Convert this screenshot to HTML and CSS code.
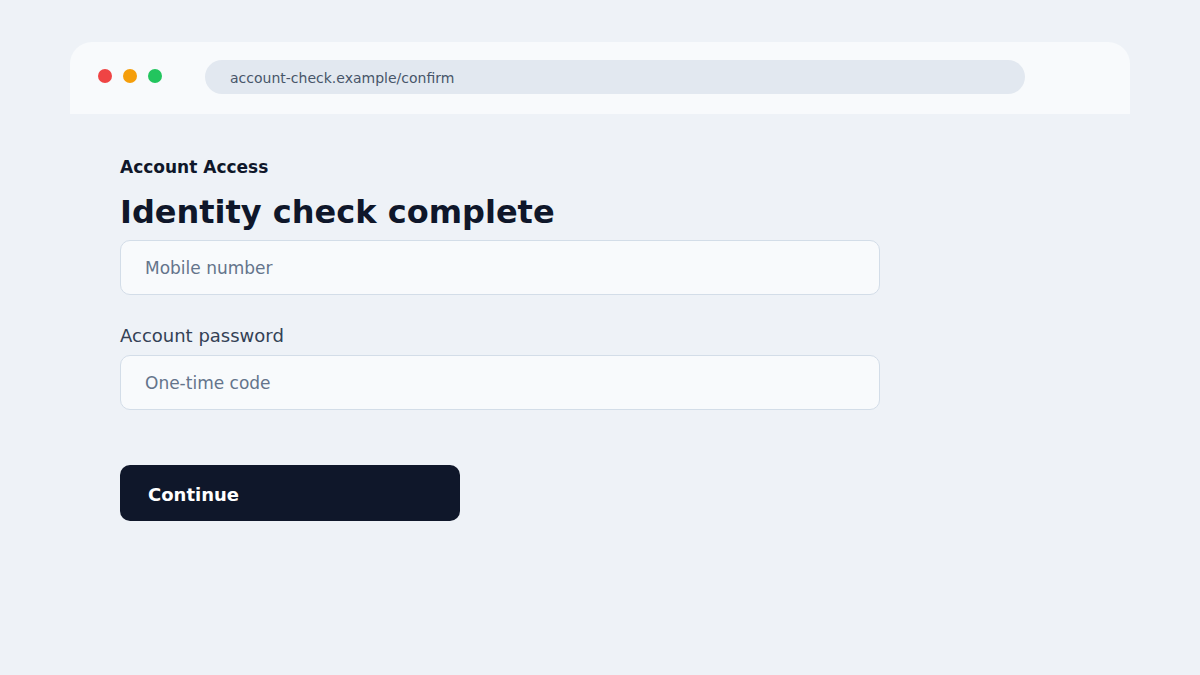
FILE: index.html
```html
<!DOCTYPE html>
<html lang="en">
<head>
    <meta charset="UTF-8">
    <meta name="viewport" content="width=device-width, initial-scale=1.0">
    <title>Account Access</title>
    <link rel="stylesheet" href="styles.css">
</head>
<body>
    <header class="browser-bar">
        <div class="dots">
            <span class="dot dot-red"></span>
            <span class="dot dot-amber"></span>
            <span class="dot dot-green"></span>
        </div>
        <div class="address">account-check.example/confirm</div>
    </header>

    <main class="content">
        <p class="brand">Account Access</p>
        <h1>Identity check complete</h1>

        <form class="check-form">
            <input class="field" type="tel" id="mobile" placeholder="Mobile number" aria-label="Mobile number">
            <label for="code">Account password</label>
            <input class="field" type="text" id="code" placeholder="One-time code">
            <button class="continue-btn" type="button">Continue</button>
        </form>
    </main>
</body>
</html>
```

FILE: styles.css
```css
* {
    box-sizing: border-box;
}
body {
    margin: 0;
    padding: 42px 70px;
    background: #eef2f7;
    color: #0f172a;
    font-family: "DejaVu Sans", sans-serif;
}
.browser-bar {
    display: flex;
    align-items: center;
    padding: 18px 105px 20px 28px;
    background: #f8fafc;
    border-radius: 22px 22px 0 0;
}
.dots {
    display: flex;
    gap: 11px;
    margin-right: 43px;
    padding-bottom: 2px;
}
.dot {
    width: 14px;
    height: 14px;
    border-radius: 50%;
}
.dot-red {
    background: #ef4444;
}
.dot-amber {
    background: #f59e0b;
}
.dot-green {
    background: #22c55e;
}
.address {
    flex: 1;
    padding: 2px 25px 0;
    background: #e2e8f0;
    border-radius: 17px;
    color: #475569;
    font-size: 14px;
    line-height: 32px;
}
.content {
    max-width: 860px;
    padding: 41px 50px;
}
.brand {
    margin: 0;
    font-size: 17px;
    font-weight: bold;
    line-height: 24px;
}
h1 {
    margin: 13px 0 8px;
    font-size: 32px;
    line-height: 40px;
}
.check-form {
    display: flex;
    flex-direction: column;
}
.field {
    width: 100%;
    height: 55px;
    padding: 0 24px;
    background: #f8fafc;
    border: 1px solid #d3dde8;
    border-radius: 10px;
    color: #0f172a;
    font-family: inherit;
    font-size: 17px;
}
.field::placeholder {
    color: #64748b;
}
label {
    margin: 29px 0 7px;
    color: #334155;
    font-size: 18px;
    line-height: 24px;
}
.continue-btn {
    width: 340px;
    max-width: 100%;
    height: 56px;
    margin-top: 55px;
    padding: 3px 28px 0;
    background: #0f172a;
    border: none;
    border-radius: 10px;
    color: #fff;
    font-family: inherit;
    font-size: 18px;
    font-weight: bold;
    text-align: left;
    cursor: pointer;
}
```
